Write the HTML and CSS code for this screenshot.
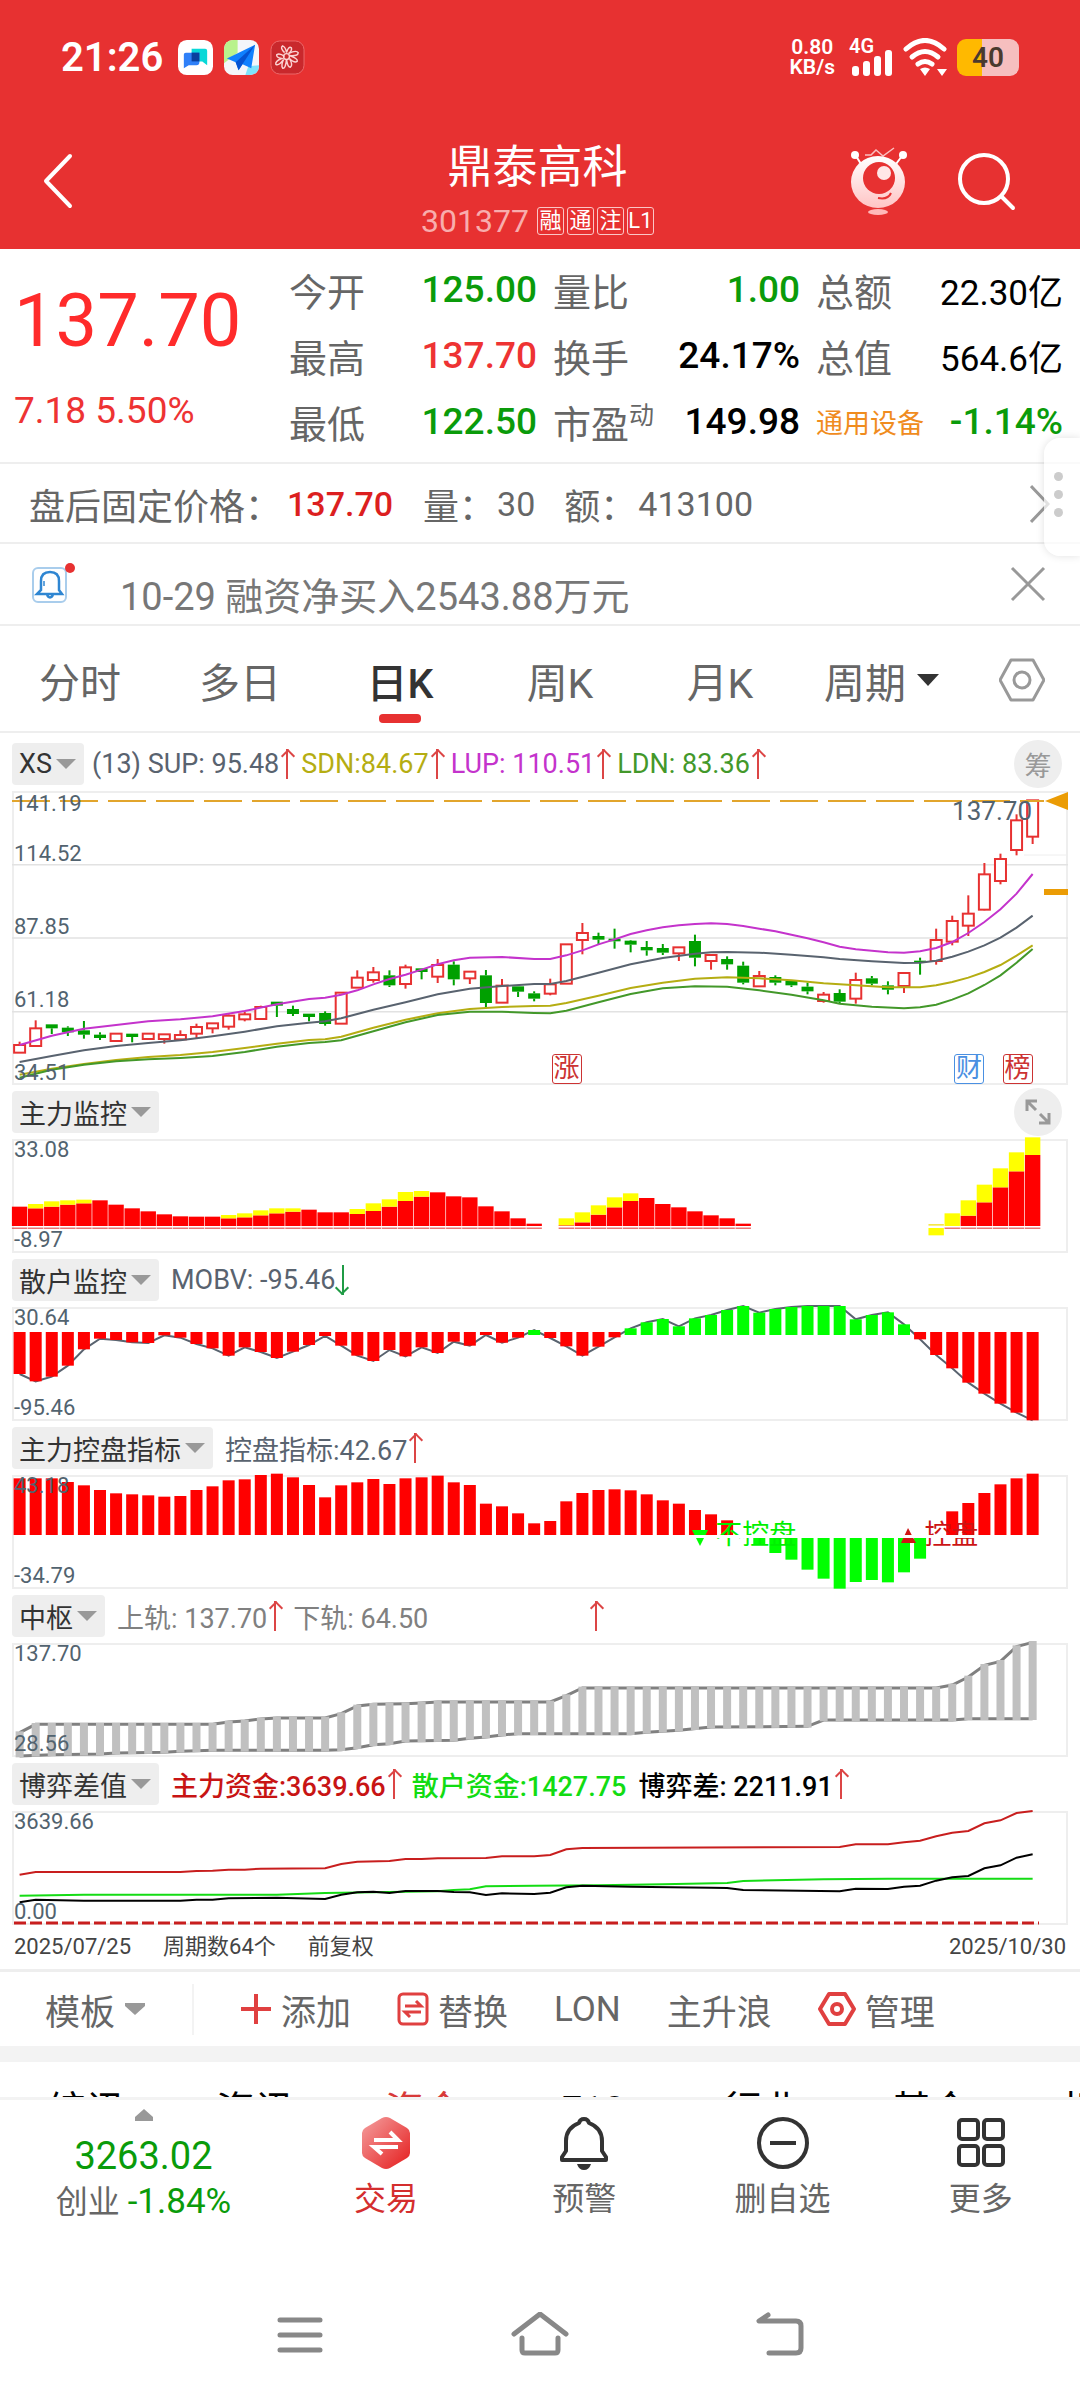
FILE: index.html
```
<!DOCTYPE html>
<html lang="zh-CN">
<head>
	<meta charset="UTF-8">
	<title>鼎泰高科 301377</title>
	<meta name="viewport" content="width=device-width, initial-scale=1.0">
	<link rel="stylesheet" href="styles.css">
</head>
<body>
	<header class="header">
		<div class="status">
			<span class="status_time">21:26</span>
			<svg class="status_app" viewBox="0 0 36 36"><rect width="36" height="36" rx="9" fill="#fff"/><path d="M14 9h14a2 2 0 0 1 2 2v15l-5-4H14z" fill="#08d8d8"/><path d="M8 13h14v10a3 3 0 0 1-3 3h-8l-5 3V15a2 2 0 0 1 2-2z" fill="#2f80f8"/><path d="M14 13h8v9h-8z" fill="#0a3f9e"/></svg>
			<svg class="status_app" viewBox="0 0 36 36"><rect width="36" height="36" rx="9" fill="#f4f6fa"/><path d="M9 0h5v13L0 24V9a9 9 0 0 1 9-9z" fill="#b9f28d"/><path d="M22 36l3-9 11-1v1a9 9 0 0 1-9 9z" fill="#7fe3fb"/><path d="M32 5L3 19l9 4 3 8 4-6 9 4z" fill="#0f80ff"/><path d="M32 5L12 23l3 8 4-6z" fill="#0553d2"/></svg>
			<svg class="status_app" viewBox="0 0 36 36"><rect x="1" y="1" width="34" height="34" rx="9" fill="#c9282c" stroke="#ec6a6c"/><g fill="none" stroke="#fbd3d3" stroke-width="1.5"><circle cx="17" cy="17" r="3"/><path d="M15 13q-5-5-2-7 3 1 4 7 2-7 5-5 1 3-3 6 8-4 10-1 0 4-9 3 9 3 8 6-3 2-8-3 4 7 1 9-3 0-4-8-1 10-4 9-2-3 1-9-5 7-8 5-1-3 6-6-6-1-5-4 3-2 8 2"/></g></svg>
			<span class="status_gap"></span>
			<span class="status_speed">0.80<br>KB/s</span>
			<svg class="status_signal" viewBox="0 0 44 38"><text x="0" y="15" class="status_4g">4G</text><g fill="#fff"><rect x="3" y="28" width="7" height="10" rx="3"/><rect x="14" y="23" width="7" height="15" rx="3"/><rect x="25" y="18" width="7" height="20" rx="3"/><rect x="36" y="12" width="7" height="26" rx="3"/></g></svg>
			<svg class="status_wifi" viewBox="0 0 46 38"><g fill="none" stroke="#fff" stroke-width="5" stroke-linecap="round"><path d="M3 11Q22-6 41 11"/><path d="M9 19Q22 8 35 19"/><path d="M15 26Q22 21 29 26"/></g><path d="M17 31q5-3 10 0l-5 7zM34 31h10l-5 7z" fill="#fff"/></svg>
			<span class="battery"><span class="battery_text">40</span></span>
		</div>
		<div class="titlebar">
			<button class="icon_btn back" aria-label="返回"><svg width="30" height="56" viewBox="0 0 30 56"><path d="M27 3L3 28l24 25" fill="none" stroke="#fff" stroke-width="4" stroke-linecap="round" stroke-linejoin="round"/></svg></button>
			<div class="title">
				<h1 class="title_name">鼎泰高科</h1>
				<div class="title_code">301377 <span class="tag">融</span><span class="tag">通</span><span class="tag">注</span><span class="tag">L1</span></div>
			</div>
			<div class="titlebar_right">
				<button class="icon_btn" aria-label="智能助手"><svg width="60" height="72" viewBox="0 0 60 72">
					<defs><linearGradient id="face" x1="0" y1="0" x2="0" y2="1"><stop offset="0" stop-color="#fff"/><stop offset="1" stop-color="#ffc4c4"/></linearGradient></defs>
					<g stroke="#fff" fill="none" stroke-width="2"><path d="M8 11l5 8M54 11l-6 8"/><path d="M17 10h6l5-5 7 6 11-8" stroke-width="1.5" stroke="#fbc0c0"/></g>
					<circle cx="7" cy="10" r="4" fill="#fff"/><circle cx="55" cy="10" r="4" fill="#fff"/>
					<ellipse cx="30" cy="37" rx="27" ry="26" fill="url(#face)"/>
					<circle cx="31" cy="33" r="16" fill="#e73131"/>
					<circle cx="36" cy="28" r="7" fill="#ffe6e6"/><path d="M30 53q10 2 13-5" fill="none" stroke="#e73131" stroke-width="2"/>
					<ellipse cx="30" cy="67" rx="10" ry="3" fill="#ffb9b9"/>
				</svg></button>
				<button class="icon_btn" aria-label="搜索"><svg width="60" height="60" viewBox="0 0 60 60"><g fill="none" stroke="#fff" stroke-width="4" stroke-linecap="round"><circle cx="28" cy="28" r="24"/><path d="M46 46l11 11"/></g></svg></button>
			</div>
		</div>
	</header>

	<section class="quote">
		<div class="price">
			<div class="price_now">137.70</div>
			<div class="price_chg">7.18 5.50%</div>
		</div>
		<dl class="facts">
			<div><dt>今开</dt><dd class="green">125.00</dd></div>
			<div><dt>量比</dt><dd class="green">1.00</dd></div>
			<div><dt>总额</dt><dd class="money">22.30亿</dd></div>
			<div><dt>最高</dt><dd class="red">137.70</dd></div>
			<div><dt>换手</dt><dd>24.17%</dd></div>
			<div><dt>总值</dt><dd class="money">564.6亿</dd></div>
			<div><dt>最低</dt><dd class="green">122.50</dd></div>
			<div><dt>市盈<sup>动</sup></dt><dd>149.98</dd></div>
			<div><dt class="sector">通用设备</dt><dd class="green">-1.14%</dd></div>
		</dl>
	</section>

	<section class="after">
		<span>盘后固定价格：</span><b class="after_price">137.70</b>
		<span>量：</span><span class="after_num">30</span>
		<span>额：</span><span class="after_num">413100</span>
		<svg class="after_more" width="20" height="40" viewBox="0 0 20 40"><path d="M1 2l17 18L1 38" fill="none" stroke="#999" stroke-width="3"/></svg>
		<div class="handle"><i></i><i></i><i></i></div>
	</section>

	<section class="notice">
		<svg class="notice_bell" width="44" height="42" viewBox="0 0 44 42"><rect x="1" y="5" width="33" height="34" rx="5" fill="none" stroke="#a9cdec" stroke-width="2"/><g fill="none" stroke="#2f86d2" stroke-width="2.5"><path d="M9 27V18q0-9 9-9t9 9v9l3 4H5zM15 32q3 5 6 0"/><path d="M12 18v5" stroke-width="1.5"/></g><circle cx="38" cy="5" r="5" fill="#e73131"/></svg>
		<span class="notice_text">10-29 融资净买入2543.88万元</span>
		<button class="icon_btn" aria-label="关闭"><svg width="36" height="36" viewBox="0 0 36 36"><path d="M2 2l32 32M34 2L2 34" stroke="#999" stroke-width="3"/></svg></button>
	</section>

	<nav class="tabs">
		<button>分时</button>
		<button>多日</button>
		<button class="on">日K</button>
		<button>周K</button>
		<button>月K</button>
		<button class="tabs_period">周期<svg width="24" height="14" viewBox="0 0 24 14"><path d="M1 1h22L12 13z" fill="#333"/></svg></button>
		<button aria-label="设置"><svg width="46" height="46" viewBox="0 0 46 46"><g fill="none" stroke="#999" stroke-width="3"><path d="M12 3h22l11 20-11 20H12L1 23z" stroke-linejoin="round"/><circle cx="23" cy="23" r="8"/></g></svg></button>
	</nav>

	<main class="charts">
		<div class="legend legend_first">
			<button class="chip">XS</button>
			<span class="slate">(13) SUP: 95.48<i class="up"></i></span>
			<span class="olive">SDN:84.67<i class="up"></i></span>
			<span class="purple">LUP: 110.51<i class="up"></i></span>
			<span class="leaf">LDN: 83.36<i class="up"></i></span>
			<button class="round">筹</button>
		</div>
		<div class="plot plot_main" id="kline">
			<span class="axis">141.19</span><span class="axis">114.52</span><span class="axis">87.85</span><span class="axis">61.18</span><span class="axis">34.51</span>
			<span class="last_price">137.70</span>
			<span class="event event_rise">涨</span><span class="event event_report">财</span><span class="event event_list">榜</span>
		</div>

		<div class="legend">
			<button class="chip">主力监控</button>
			<button class="round" aria-label="全屏"><svg width="26" height="26" viewBox="0 0 26 26"><path d="M2 12V2h10M2 2l9 9M24 14v10H14M24 24l-9-9" fill="none" stroke="#999" stroke-width="3"/></svg></button>
		</div>
		<div class="plot" id="force"><span class="axis">33.08</span><span class="axis">-8.97</span></div>

		<div class="legend">
			<button class="chip">散户监控</button>
			<span class="slate">MOBV: -95.46<i class="down"></i></span>
		</div>
		<div class="plot" id="mobv"><span class="axis">30.64</span><span class="axis">-95.46</span></div>

		<div class="legend">
			<button class="chip">主力控盘指标</button>
			<span class="slate">控盘指标:42.67<i class="up"></i></span>
		</div>
		<div class="plot" id="control">
			<span class="axis">43.18</span><span class="axis">-34.79</span>
			<span class="signal signal_off">不控盘</span><span class="signal signal_on">控盘</span>
			<span class="zero"></span>
		</div>

		<div class="legend">
			<button class="chip">中枢</button>
			<span class="gray">上轨: 137.70<i class="up"></i></span>
			<span class="gray lower">下轨: 64.50</span>
			<i class="up"></i>
		</div>
		<div class="plot" id="pivot"><span class="axis">137.70</span><span class="axis">28.56</span></div>

		<div class="legend">
			<button class="chip">博弈差值</button>
			<span class="crimson">主力资金:3639.66<i class="up"></i></span>
			<span class="lime">散户资金:1427.75</span>
			<span class="black">博弈差: 2211.91<i class="up"></i></span>
		</div>
		<div class="plot" id="game"><span class="axis">3639.66</span><span class="axis">0.00</span></div>

		<div class="dates"><span>2025/07/25</span><span>周期数64个</span><span>前复权</span><span class="dates_end">2025/10/30</span></div>
	</main>

	<div class="tools">
		<button class="tools_tpl">模板<svg width="22" height="14" viewBox="0 0 22 14"><path d="M1 1h20v3l-10 9L1 4z" fill="#999"/></svg></button>
		<button><svg width="32" height="32" viewBox="0 0 32 32"><path d="M16 1v30M1 16h30" stroke="#e04040" stroke-width="4"/></svg>添加</button>
		<button><svg width="32" height="34" viewBox="0 0 32 34"><g fill="none" stroke="#e04040" stroke-width="3"><rect x="2" y="2" width="28" height="30" rx="4"/><path d="M8 14h16l-5-5M24 20H8l5 5"/></g></svg>替换</button>
		<button>LON</button>
		<button>主升浪</button>
		<button><svg width="38" height="36" viewBox="0 0 38 36"><g fill="none" stroke="#e04040" stroke-width="4"><path d="M11 3h16l9 15-9 15H11L2 18z" stroke-linejoin="round"/><circle cx="19" cy="18" r="5"/></g></svg>管理</button>
	</div>

	<nav class="pages">
		<a href="#">综讯</a><a href="#">资讯</a><a href="#" class="on">资金</a><a href="#">F10</a><a href="#">行业</a><a href="#">基金</a><a href="#">相关</a>
	</nav>

	<footer class="bottom">
		<a href="#" class="index">
			<svg width="20" height="12" viewBox="0 0 20 12"><path d="M10 0l9 8v4H1V8z" fill="#999"/></svg>
			<span class="index_value">3263.02</span>
			<span class="index_name">创业 <span class="index_chg green">-1.84%</span></span>
		</a>
		<button class="trade"><svg width="54" height="54" viewBox="0 0 54 54">
			<defs><linearGradient id="hex" x1="0" y1="0" x2="1" y2="1"><stop offset="0" stop-color="#f4a0a0"/><stop offset="1" stop-color="#e51c1c"/></linearGradient></defs>
			<path d="M27 1q2 0 4 1l17 10q3 2 3 5v20q0 3-3 5L31 52q-4 2-8 0L6 42q-3-2-3-5V17q0-3 3-5L23 2q2-1 4-1z" fill="url(#hex)"/><path d="M15 24h24l-8-8M39 31H15l8 7" fill="none" stroke="#fff" stroke-width="4"/></svg>交易</button>
		<button><svg width="54" height="54" viewBox="0 0 54 54"><path d="M27 3q4 0 5 4 13 5 13 18v10l4 6v3H5v-3l4-6V25Q9 12 22 7q1-4 5-4z" fill="none" stroke="#333" stroke-width="4" stroke-linejoin="round"/><path d="M20 48h14q-2 6-7 6t-7-6z" fill="#333"/></svg>预警</button>
		<button><svg width="54" height="54" viewBox="0 0 54 54"><circle cx="27" cy="27" r="24" fill="none" stroke="#333" stroke-width="4"/><path d="M14 27h26" stroke="#333" stroke-width="4"/></svg>删自选</button>
		<button><svg width="54" height="54" viewBox="0 0 54 54"><g fill="none" stroke="#333" stroke-width="4"><rect x="5" y="4" width="19" height="19" rx="3"/><rect x="30" y="4" width="19" height="19" rx="3"/><rect x="5" y="30" width="19" height="19" rx="3"/><rect x="30" y="30" width="19" height="19" rx="3"/></g></svg>更多</button>
	</footer>

	<div class="sysnav">
		<button aria-label="任务"><svg width="60" height="48" viewBox="0 0 60 48"><path d="M10 8h40M10 23h40M10 38h40" stroke="#888" stroke-width="5" stroke-linecap="round"/></svg></button>
		<button aria-label="主页"><svg width="60" height="48" viewBox="0 0 60 48"><path d="M4 22L30 2l26 20M12 26v12q0 3 3 3h30q3 0 3-3V26" fill="none" stroke="#888" stroke-width="5" stroke-linecap="round" stroke-linejoin="round"/></svg></button>
		<button aria-label="后退"><svg width="60" height="48" viewBox="0 0 60 48"><path d="M18 3L9 9h37q5 0 5 5v22q0 5-5 5H19" fill="none" stroke="#888" stroke-width="5" stroke-linecap="round" stroke-linejoin="round"/></svg></button>
	</div>

	<script src="charts.js"></script>
</body>
</html>
```
FILE: styles.css
```
*{
	margin: 0;
	padding: 0;
	box-sizing: border-box;
}
body {
	font-family: Roboto, "Noto Sans CJK SC", sans-serif;
	color: #666;
	background: #fff;
}
button {
	border: none;
	background: none;
	font: inherit;
	color: inherit;
}
a {
	color: inherit;
	text-decoration: none;
}
svg {
	display: block;
	flex: none;
}
i {
	font-style: normal;
}
.green { color: #0a9b0a; }
.red { color: #ee3333; }
.slate { color: #59636f; }
.olive { color: #b5ad12; }
.purple { color: #c433cc; }
.leaf { color: #43982a; }
.gray { color: #808080; }
.crimson { color: #c81414; }
.lime { color: #12dc12; }
.black { color: #000; }

/* header */
.header {
	background: #e73131;
	color: #fff;
	height: 249px;
}
.status {
	display: flex;
	align-items: center;
	height: 114px;
	padding: 0 61px;
}
.status_time {
	font-size: 40px;
	font-weight: 600;
	margin-right: 15px;
}
.status_app {
	width: 35px;
	height: 35px;
	margin-right: 11px;
}
.status_gap {
	flex: 1;
}
.status_speed {
	font-size: 21px;
	line-height: 20px;
	font-weight: 600;
	text-align: center;
}
.status_signal {
	width: 44px;
	height: 38px;
	margin: 0 10px 0 14px;
}
.status_4g {
	font-size: 20px;
	font-weight: 600;
	fill: #fff;
}
.status_wifi {
	width: 46px;
	height: 38px;
}
.battery {
	width: 62px;
	height: 37px;
	margin-left: 8px;
	border-radius: 9px;
	background: linear-gradient(90deg, #ffb900 40%, #f6bfbf 40%);
}
.battery_text {
	display: block;
	text-align: center;
	font-size: 28px;
	line-height: 37px;
	font-weight: 600;
	color: #4a3a2e;
}
.titlebar {
	display: grid;
	grid-template-columns: 1fr auto 1fr;
	padding: 22px 64px 0 43px;
}
.icon_btn {
	display: flex;
	align-items: center;
}
.back {
	height: 90px;
}
.title {
	text-align: center;
	margin-left: 16px;
}
.title_name {
	font-size: 45px;
	line-height: 64px;
	font-weight: 400;
}
.title_code {
	display: flex;
	align-items: center;
	gap: 3px;
	font-size: 32px;
	line-height: 42px;
	color: #f8adad;
}
.tag {
	width: 27px;
	height: 28px;
	border: 1px solid #fbc6c6;
	border-radius: 3px;
	font-size: 22px;
	line-height: 25px;
	color: #fff;
}
.tag:first-child {
	margin-left: 5px;
}
.titlebar_right {
	display: flex;
	justify-content: flex-end;
	gap: 48px;
	height: 90px;
}

/* quote */
.quote {
	display: grid;
	grid-template-columns: 289px 1fr;
	height: 215px;
	border-bottom: 2px solid #eee;
	padding: 7px 17px 0 0;
}
.price {
	padding-left: 14px;
	color: #ff2b2b;
}
.price_now {
	font-size: 74px;
	line-height: 130px;
	font-weight: 400;
}
.price_chg {
	font-size: 37px;
	line-height: 50px;
	color: #ee3333;
}
.facts {
	display: grid;
	grid-template-columns: 248px 1fr 247px;
	grid-auto-rows: 66px;
	column-gap: 16px;
}
.facts div {
	display: flex;
	justify-content: space-between;
	align-items: center;
	white-space: nowrap;
}
.facts dt {
	font-size: 38px;
}
.facts dd {
	font-size: 37px;
	font-weight: 500;
}
.facts dd:not([class]), .facts .money {
	color: #000;
}
.facts .money {
	font-size: 35px;
	font-weight: 400;
}
.facts sup {
	font-size: 25px;
	line-height: 25px;
}
.facts .sector {
	font-size: 27px;
	color: #f08c1e;
}

.after {
	position: relative;
	display: flex;
	align-items: center;
	height: 80px;
	padding: 2px 30px 0 29px;
	border-bottom: 2px solid #eee;
	font-size: 36px;
}
.after_price {
	font-size: 34px;
	font-weight: 500;
	color: #dc1f1f;
	margin: 0 30px 0 6px;
}
.after_num {
	font-size: 34px;
	margin: 0 29px 0 2px;
}
.after_more {
	margin-left: auto;
}
.handle {
	position: absolute;
	right: 0;
	top: -26px;
	width: 36px;
	height: 118px;
	padding: 34px 0 0 10px;
	border-radius: 16px 0 0 16px;
	background: rgba(255,255,255,0.7);
	box-shadow: 0 0 8px rgba(0,0,0,0.12);
}
.handle i {
	display: block;
	width: 9px;
	height: 9px;
	margin-bottom: 9px;
	border-radius: 50%;
	background: #ccc;
}

.notice {
	display: flex;
	align-items: center;
	height: 82px;
	padding: 0 34px 0 32px;
	border-bottom: 2px solid #eee;
}
.notice_text {
	flex: 1;
	padding: 26px 0 0 44px;
	font-size: 38px;
	line-height: 46px;
	color: #777;
}

/* period tabs */
.tabs {
	display: grid;
	grid-template-columns: repeat(5, 160px) 1fr 116px;
	height: 107px;
	border-bottom: 2px solid #eee;
	font-size: 41px;
}
.tabs button {
	display: flex;
	align-items: center;
	justify-content: center;
	gap: 10px;
	padding-top: 3px;
}
.tabs .on {
	position: relative;
	color: #333;
	font-weight: 500;
}
.tabs .on::after {
	content: "";
	position: absolute;
	left: calc(50% - 21px);
	bottom: 8px;
	width: 42px;
	height: 9px;
	border-radius: 4px;
	background: #e73131;
}

/* charts */
.charts {
	padding: 0 12px;
}
.legend {
	display: flex;
	align-items: center;
	gap: 12px;
	height: 54px;
	font-size: 27px;
	white-space: nowrap;
}
.legend_first {
	height: 58px;
	padding-top: 4px;
	gap: 8px;
}
.chip {
	display: flex;
	align-items: center;
	gap: 4px;
	height: 42px;
	padding: 0 8px 0 7px;
	border-radius: 4px;
	background: #eee;
	color: #333;
}
.chip::after {
	content: "";
	border: 10px solid transparent;
	border-top-color: #999;
	border-bottom: none;
}
.legend span {
	display: flex;
	align-items: center;
	white-space: pre;
}
.up, .down {
	width: 12px;
	height: 30px;
	margin-left: 2px;
	background: linear-gradient(#dc4545, #dc4545) center / 2px 100% no-repeat;
	position: relative;
}
.up::before, .down::before {
	content: "";
	position: absolute;
	left: 2px;
	top: 2px;
	width: 8px;
	height: 8px;
	border: solid #dc4545;
	border-width: 2px 0 0 2px;
	transform: rotate(45deg);
}
.down {
	transform: rotate(180deg);
	background-image: linear-gradient(#1f9b45, #1f9b45);
}
.down::before {
	border-color: #1f9b45;
}
.lower {
	margin-right: 148px;
}
.crimson, .lime, .black {
	font-weight: 500;
}
.round {
	width: 48px;
	height: 48px;
	margin: 0 6px 0 auto;
	border-radius: 50%;
	background: #eee;
	color: #999;
	display: flex;
	align-items: center;
	justify-content: center;
}
.plot {
	position: relative;
	display: flex;
	flex-direction: column;
	justify-content: space-between;
	height: 114px;
	padding-bottom: 2px;
	box-shadow: inset 0 0 0 2px #eee;
}
.plot_main {
	display: grid;
	grid-template-rows: 24px 50px repeat(3, 73px);
	height: 294px;
	align-items: end;
	padding: 0;
}
.plot svg {
	position: absolute;
	left: 0;
	top: 0;
	width: 100%;
	height: 100%;
	overflow: visible;
}
.axis {
	position: relative;
	z-index: 1;
	padding-left: 2px;
	font-size: 22px;
	line-height: 22px;
	color: #52636f;
}
.last_price {
	position: absolute;
	z-index: 1;
	right: 36px;
	top: 5px;
	font-size: 26px;
	line-height: 30px;
	color: #52636f;
}
.event {
	position: absolute;
	z-index: 1;
	bottom: 1px;
	width: 30px;
	height: 30px;
	border: 1px solid currentColor;
	border-radius: 3px;
	background: #fff;
	font-size: 26px;
	line-height: 27px;
	text-align: center;
	color: #cc3333;
}
.event_rise { left: 51.1%; }
.event_report { left: 89.2%; color: #4a90e2; }
.event_list { left: 93.8%; }
.signal {
	position: absolute;
	z-index: 1;
	top: 43px;
	font-size: 27px;
	line-height: 34px;
}
.signal_off { left: 66.6%; color: #00f000; }
.signal_on { left: 86.4%; color: #cc1414; }
.zero {
	position: absolute;
	z-index: 2;
	left: 62%;
	right: 4%;
	top: 60px;
	height: 3px;
	background: #fff;
}
.dates {
	display: flex;
	gap: 32px;
	height: 44px;
	padding: 0 2px;
	font-size: 22px;
	line-height: 44px;
	color: #444;
}
.dates_end {
	margin-left: auto;
}

/* indicator tools */
.tools {
	display: flex;
	align-items: center;
	gap: 46px;
	height: 77px;
	border-top: 3px solid #eee;
	padding: 0 45px;
	font-size: 35px;
}
.tools button {
	display: flex;
	align-items: center;
	gap: 9px;
}
.tools .tools_tpl {
	padding-right: 46px;
	border-right: 2px solid #f3f3f3;
}
.pages {
	display: flex;
	height: 54px;
	overflow: hidden;
	border-top: 16px solid #f3f3f3;
	border-bottom: 3px solid #f3f3f3;
	font-size: 39px;
	line-height: 46px;
	color: #000;
}
.pages a {
	flex: 0 0 169px;
	padding: 26px 0 0 3px;
	text-align: center;
}
.pages .on {
	color: #d83a3a;
}

/* bottom bar */
.bottom {
	display: grid;
	grid-template-columns: 287px repeat(4, 1fr);
	height: 172px;
	font-size: 32px;
}
.bottom button, .index {
	display: flex;
	flex-direction: column;
	align-items: center;
}
.bottom button {
	gap: 3px;
	padding-top: 16px;
}
.bottom .trade {
	color: #d42e2e;
}
.index {
	padding-top: 9px;
}
.index_value {
	font-size: 38px;
	line-height: 48px;
	padding-top: 11px;
	color: #0a9b0a;
}
.index_name {
	line-height: 44px;
}
.index_chg {
	font-size: 35px;
}
.sysnav {
	display: flex;
	justify-content: center;
	gap: 180px;
	padding: 40px 0;
}
```
FILE: charts.js
```
var NS = 'http://www.w3.org/2000/svg';
var W = 1056;
var COUNT = 64;

function x(i){
	return 7.6 + i*16.08;
}

/* every panel keeps its values in thirds of a pixel, counted from its own top */
function panel(id, top, height){
	var svg = document.createElementNS(NS, 'svg');
	svg.setAttribute('viewBox', '0 0 ' + W + ' ' + height);
	svg.setAttribute('preserveAspectRatio', 'none');
	document.getElementById(id).appendChild(svg);

	function add(tag, attrs){
		var el = document.createElementNS(NS, tag);
		for(var key in attrs){
			el.setAttribute(key, attrs[key]);
		}
		svg.appendChild(el);
	}
	function y(v){
		return (v - top)/3;
	}
	return {
		add: add,
		y: y,
		rect: function(cx, w, from, to, color){
			add('rect', {x: cx - w/2, y: y(Math.min(from, to)), width: w, height: Math.abs(to - from)/3, fill: color});
		},
		line: function(points, color, width){
			var str = '';
			for(var i = 0; i < points.length; i += 2){
				str += x(points[i]) + ',' + y(points[i+1]) + ' ';
			}
			add('polyline', {points: str, fill: 'none', stroke: color, 'stroke-width': width});
		}
	};
}

/* fill the gaps between [index, value, index, value ...] */
function spread(points){
	var out = [];
	for(var i = 0; i < points.length - 2; i += 2){
		for(var k = points[i]; k < points[i+2]; k++){
			out[k] = points[i+1] + (points[i+3] - points[i+1])*(k - points[i])/(points[i+2] - points[i]);
		}
	}
	out.push(points[points.length-1]);
	return out;
}

/* K line: high, body top, body bottom, low; 1 = up, 0 = down */
var candles = [
	[1,904,914,937,937],[1,840,864,917,917],[0,852,852,864,881],[0,858,862,876,887],[0,842,870,883,895],[0,876,883,893,899],
	[1,880,880,902,902],[0,880,880,890,906],[1,880,880,896,896],[1,882,882,896,910],[1,870,884,897,897],[1,850,860,880,893],
	[1,849,849,864,879],[1,822,826,859,868],[1,815,822,837,843],[1,796,800,836,836],[0,784,784,796,830],[0,796,806,821,827],
	[0,820,820,830,843],[0,813,818,851,856],[1,757,757,850,850],[1,690,712,742,742],[1,680,696,719,727],[0,690,705,735,740],
	[1,673,681,731,745],[0,684,684,695,717],[1,656,674,709,728],[0,663,673,717,735],[1,692,694,714,731],[0,689,705,788,800],
	[1,716,736,787,787],[0,738,738,754,770],[0,753,759,775,783],[1,715,732,760,765],[1,612,612,730,730],[1,548,578,599,642],
	[0,577,587,598,611],[0,565,595,603,625],[0,599,601,613,636],[0,602,620,630,646],[0,611,623,637,644],[1,621,621,639,662],
	[0,583,602,652,678],[1,644,644,662,688],[0,648,656,672,688],[0,664,676,727,732],[1,692,707,738,738],[0,705,710,727,735],
	[0,722,722,735,740],[0,727,739,753,762],[1,755,763,782,787],[0,747,758,784,789],[1,697,719,775,790],[0,707,714,730,735],
	[0,723,735,748,762],[1,698,698,737,758],[0,652,661,668,703],[1,565,599,662,673],[1,526,542,604,615],[1,465,520,556,587],
	[1,368,402,508,510],[1,340,356,422,432],[1,222,240,329,345],[1,180,180,289,311]
];

var k = panel('kline', 152, 294);
[373, 593, 814].forEach(function(v){
	k.add('path', {d: 'M0 ' + k.y(v) + 'H' + W, stroke: '#e2e2e2', 'stroke-width': 1.5});
});
k.add('path', {d: 'M1012 64H1056', stroke: '#eee', 'stroke-width': 1});
candles.forEach(function(c, i){
	var color = c[0] ? '#e73131' : '#00a000';
	k.rect(x(i), 2, c[1], c[2], color);
	k.rect(x(i), 2, c[3], c[4], color);
	if(c[0]){
		k.add('rect', {x: x(i) - 5.5, y: k.y(c[2]), width: 11, height: (c[3] - c[2])/3, fill: '#fff', stroke: color, 'stroke-width': 2});
	}else {
		k.rect(x(i), 12, c[2], c[3], color);
	}
});
k.line([0,914,2,886,4,865,6,854,8,843,10,837,12,828,14,812,16,792,18,776,19,772,20,763,21,750,22,732,23,716,24,703,25,688,26,672,27,660,28,652,30,650,32,656,33,656,34,645,35,630,36,612,37,597,38,581,39,570,40,561,41,555,42,551,43,549,44,551,45,557,46,565,47,573,48,583,49,594,50,606,51,619,52,627,53,631,54,636,55,637,56,633,57,623,58,605,59,578,60,545,61,507,62,460,63,401], '#c433cc', 2);
k.line([0,965,2,947,4,930,6,917,8,908,10,900,12,888,14,874,16,858,18,847,19,843,20,834,22,808,24,786,26,762,28,745,30,737,32,731,33,731,34,722,36,697,38,672,40,653,42,640,43,636,44,635,46,637,48,643,50,651,51,656,53,663,55,668,56,667,57,661,58,649,59,634,60,615,61,592,62,562,63,526], '#59636f', 2);
k.line([0,1003,2,985,4,971,6,959,8,950,10,944,12,935,14,923,16,910,18,899,19,897,20,889,22,862,24,838,26,819,28,806,30,800,32,797,33,796,34,788,36,766,38,743,40,727,42,715,44,711,46,714,48,720,50,729,52,735,54,741,56,741,57,735,58,725,59,712,60,695,61,674,62,646,63,615], '#b5ad12', 2);
k.line([0,1012,2,988,4,973,6,963,8,957,10,953,12,947,14,935,16,919,18,908,19,905,20,900,22,873,24,846,26,824,28,814,30,814,32,818,33,819,34,811,36,786,38,761,40,744,42,738,44,739,46,750,48,763,50,780,51,790,53,799,55,804,56,801,57,793,58,778,59,759,60,734,61,705,62,667,63,626], '#43982a', 2);
k.add('path', {d: 'M0 10H1032', stroke: '#e2a52c', 'stroke-width': 2, 'stroke-dasharray': '38 10'});
k.add('path', {d: 'M1033 10L1056 1V19z', fill: '#eb9c05'});
k.add('path', {d: 'M1032 101H1056', stroke: '#eb9c05', 'stroke-width': 6});

/* 主力监控: index, red top, yellow top */
var force = panel('force', 177, 114);
[
	[0,380],[1,385,372],[2,380,364],[3,374,361],[4,370,359],[5,361],[6,374],[7,385],[8,394],[9,403],[10,409],[11,410],[12,410],
	[13,415,405],[14,412,400],[15,406,391],[16,400,385],[17,395,385],[18,389],[19,397],[20,397],[21,402,387],[22,393,370],
	[23,380,358],[24,363,336],[25,350,333],[26,337],[27,349],[28,352],[29,379],[30,394],[31,415],[32,431],
	[34,436,415],[35,427,397],[36,404,376],[37,382,352],[38,363,340],[39,354],[40,372],[41,382],[42,394],[43,406],[44,415],[45,431],
	[58,438,400],[59,407,361],[60,367,314],[61,322,265],[62,274,217],[63,225,172]
].forEach(function(b){
	force.rect(x(b[0]), 15.4, b[1], 438, '#f00');
	force.rect(x(b[0]), 15.4, 443, 446, '#e03030');
	if(b[2]){
		force.rect(x(b[0]), 15.4, b[2], b[1], '#ff0');
	}
});
force.rect(x(57), 15.4, 432, 437, '#f5e84a');
force.rect(x(57), 15.4, 444, 466, '#ff0');

/* 散户监控 */
var mobvData = [882,904,890,857,808,776,780,787,789,766,773,792,805,827,802,816,834,815,795,768,797,827,843,810,829,802,819,785,797,765,788,773,750,774,799,827,800,772,745,727,717,739,715,705,690,678,698,687,681,678,678,678,718,705,697,733,778,825,865,908,941,971,998,1021];
var mobv = panel('mobv', 681, 114);
var mobvLine = [];
mobvData.forEach(function(v, i){
	mobvLine.push(i, v);
});
mobv.line(mobvLine, '#59636f', 2);
mobvData.forEach(function(v, i){
	mobv.rect(x(i), 12, v > 760 ? 756 : 765, v, v > 760 ? '#f00' : '#0f0');
});

/* 主力控盘 */
var control = panel('control', 165, 114);
[175,175,175,186,196,210,220,223,226,230,228,210,199,181,178,165,161,172,195,232,196,187,177,192,175,172,167,187,195,251,259,280,310,303,244,219,210,208,211,223,241,251,270,283,301,345,375,399,419,449,476,506,486,480,487,457,416,345,274,249,219,193,175,161].forEach(function(v, i){
	if(v < 345){
		control.rect(x(i), 12, v, 345, '#f00');
	}else if(v > 345){
		control.rect(x(i), 12, 353, v, '#0f0');
	}
});
control.add('path', {d: 'M680 55H696L688 71z', fill: '#0f0'});
control.add('path', {d: 'M889 68H904L896 53z', fill: '#d01414'});

/* 中枢 */
var pivot = panel('pivot', 668, 114);
var upper = [0,937,1,912,12,912,13,905,14,902,15,896,16,893,19,893,20,880,21,857,22,852,24,850,25,848,26,845,33,845,34,826,35,803,57,803,58,794,59,770,60,735,61,723,62,679,63,666];
var lower = [0,1007,2,1003,5,1001,6,998,9,996,10,993,12,990,19,990,20,988,21,982,22,973,23,970,24,962,27,960,28,954,29,950,30,944,31,940,38,940,39,936,41,930,43,920,49,918,50,899,58,899,59,895,63,895];
pivot.line(upper, '#808080', 3);
pivot.line(lower, '#808080', 3);
var up = spread(upper);
var low = spread(lower);
for(var i = 0; i < COUNT; i++){
	pivot.rect(x(i), 8, up[i] - 4, low[i] + 4, '#c0c0c0');
}

/* 博弈差值 */
var game = panel('game', 153, 114);
game.line([0,407,4,404,16,404,19,399,22,397,26,394,27,390,28,388,29,379,32,377,36,376,40,373,44,369,45,363,50,358,54,356,63,356], '#14dc14', 2);
game.line([0,344,1,336,10,336,11,333,12,332,13,329,14,329,15,326,19,325,20,312,21,305,23,303,24,297,25,297,26,295,29,294,30,289,32,289,33,285,34,268,35,264,51,261,52,253,54,253,55,247,56,242,57,229,58,218,59,213,60,190,61,181,62,159,63,153], '#c81e1e', 2);
game.line([0,427,1,419,4,422,10,422,11,419,12,419,13,415,16,413,19,417,20,404,21,397,22,395,23,399,24,393,26,393,27,396,28,397,29,405,30,400,32,402,33,398,34,382,35,377,38,380,43,383,44,384,45,390,51,394,52,386,54,387,55,380,56,377,57,362,58,352,59,348,60,325,61,316,62,293,63,283], '#000', 2);
game.add('path', {d: 'M2 112H1027', stroke: '#c81e1e', 'stroke-width': 3, 'stroke-dasharray': '12 4'});
```
